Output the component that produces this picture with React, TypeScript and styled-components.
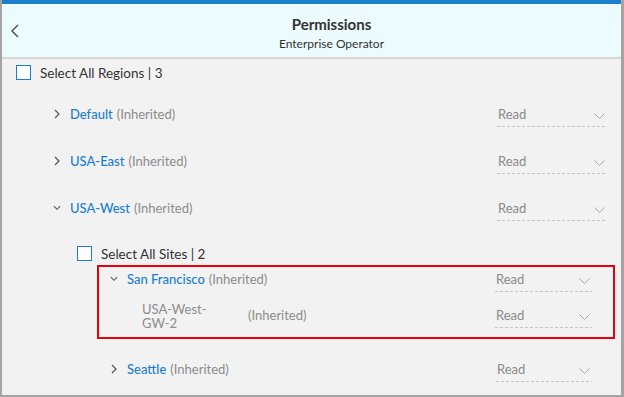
import React from "react";
import styled, { createGlobalStyle } from "styled-components";

const GlobalStyle = createGlobalStyle`
  html, body {
    margin: 0;
    padding: 0;
    background: #ffffff;
  }
  body {
    font-family: Lato, "Open Sans", "Liberation Sans", sans-serif;
  }
  * {
    box-sizing: border-box;
  }
`;

const Frame = styled.div`
  width: 624px;
  height: 397px;
  display: flex;
  flex-direction: column;
  background: #f2f2f2;
  border-left: 2px solid #a4a4a4;
  border-right: 3px solid #a4a4a4;
  border-bottom: 2px solid #a4a4a4;
  overflow: hidden;
`;

const TopBar = styled.div`
  height: 4px;
  flex-shrink: 0;
  background: #1b7fcd;
`;

const Header = styled.header`
  height: 55px;
  flex-shrink: 0;
  display: grid;
  grid-template-columns: 40px 1fr;
  background: #ebfbfe;
  border-bottom: 2px solid #d6d6d6;
`;

const BackButton = styled.button`
  border: none;
  background: none;
  padding: 20px 0 0 8px;
  display: flex;
  align-items: flex-start;
  cursor: pointer;
`;

const TitleBlock = styled.div`
  display: flex;
  flex-direction: column;
  align-items: center;
  padding-top: 11px;
`;

const Title = styled.h1`
  margin: 0;
  font-size: 15px;
  line-height: 19px;
  font-weight: 700;
  color: #333;
`;

const Subtitle = styled.div`
  margin-top: 2px;
  font-size: 12px;
  line-height: 15px;
  color: #333;
`;

const Body = styled.main`
  flex: 1;
  padding: 0 14px;
  display: flex;
  flex-direction: column;
`;

const SelectAllRow = styled.label<{ $top: number }>`
  display: flex;
  align-items: center;
  gap: 9px;
  height: 15px;
  margin-top: ${(p) => p.$top}px;
  font-size: 13.5px;
  color: #333;
`;

const CheckBox = styled.span`
  width: 15px;
  height: 15px;
  flex-shrink: 0;
  background: #fff;
  border: 1.5px solid #1a7fd0;
`;

const RegionList = styled.div`
  margin-top: 24px;
  display: flex;
  flex-direction: column;
`;

const Row = styled.div<{ $indent: number; $height?: number }>`
  display: flex;
  align-items: flex-start;
  padding-left: ${(p) => p.$indent}px;
  ${(p) => (p.$height ? `height: ${p.$height}px;` : "")}
`;

const Toggle = styled.span`
  width: 8px;
  height: 18px;
  margin-top: 1px;
  margin-right: 9px;
  display: flex;
  align-items: center;
  justify-content: center;
  flex-shrink: 0;
`;

const NameLine = styled.div`
  flex: 1;
  margin-top: 1px;
  font-size: 13px;
  line-height: 18px;
  white-space: nowrap;
`;

const Name = styled.span`
  color: #1a7fd0;
  font-weight: 500;
`;

const Inherited = styled.span`
  color: #8c8c8c;
  margin-left: 4px;
`;

const Dropdown = styled.div<{ $width: number; $offset?: number }>`
  width: ${(p) => p.$width}px;
  height: 23px;
  flex-shrink: 0;
  margin-top: ${(p) => p.$offset ?? 0}px;
  padding: 0 2px 4px 1px;
  display: flex;
  align-items: center;
  justify-content: space-between;
  font-size: 13px;
  line-height: 18px;
  color: #8a8a8a;
  background-image: linear-gradient(to right, #c4c4c4 60%, transparent 60%);
  background-size: 5px 1px;
  background-repeat: repeat-x;
  background-position: left bottom;
`;

const DropArrow = styled.svg`
  margin-top: 5px;
`;

const Sites = styled.div`
  padding-left: 61px;
  margin-top: 1px;
  display: flex;
  flex-direction: column;
`;

const Highlight = styled.div`
  margin: 4px -8px 0 20px;
  border: 2px solid #e8000b;
  padding: 2px 21px 7px 11px;
  display: flex;
  flex-direction: column;
`;

const GatewayRow = styled.div`
  display: flex;
  align-items: flex-start;
  margin-top: 10px;
  padding-left: 32px;
`;

const GatewayName = styled.div`
  width: 75px;
  margin-right: 31px;
  font-size: 13px;
  line-height: 14px;
  color: #8c8c8c;
`;

const GatewayInherited = styled.div`
  flex: 1;
  margin-top: 4px;
  font-size: 13px;
  line-height: 18px;
  color: #8c8c8c;
`;

const SeattleRow = styled(Row)`
  margin-top: 20px;
  margin-right: 15px;
`;

function ChevronRight() {
  return (
    <svg width="6" height="10" viewBox="0 0 6 10">
      <path d="M1 1l4 4-4 4" fill="none" stroke="#555" strokeWidth="1.2" />
    </svg>
  );
}

function ChevronDown() {
  return (
    <svg width="9" height="6" viewBox="0 0 9 6">
      <path d="M1 1l3.5 3.5L8 1" fill="none" stroke="#555" strokeWidth="1.2" />
    </svg>
  );
}

function Select({ width, offset }: { width: number; offset?: number }) {
  return (
    <Dropdown $width={width} $offset={offset}>
      <span>Read</span>
      <DropArrow width="11" height="6" viewBox="0 0 11 6">
        <path d="M0.5 0.5l5 5 5-5" fill="none" stroke="#a8a8a8" strokeWidth="1" />
      </DropArrow>
    </Dropdown>
  );
}

const regions = [
  { name: "Default", open: false },
  { name: "USA-East", open: false },
  { name: "USA-West", open: true },
];

export default function App() {
  return (
    <>
      <GlobalStyle />
      <Frame>
        <TopBar />
        <Header>
          <BackButton aria-label="Back">
            <svg width="9" height="14" viewBox="0 0 9 14">
              <path d="M8 1L2 7l6 6" fill="none" stroke="#555" strokeWidth="1.5" />
            </svg>
          </BackButton>
          <TitleBlock>
            <Title>Permissions</Title>
            <Subtitle>Enterprise Operator</Subtitle>
          </TitleBlock>
        </Header>

        <Body>
          <SelectAllRow $top={6}>
            <CheckBox />
            Select All Regions | 3
          </SelectAllRow>

          <RegionList>
            {regions.map((r) => (
              <Row key={r.name} $indent={37} $height={47}>
                <Toggle>{r.open ? <ChevronDown /> : <ChevronRight />}</Toggle>
                <NameLine>
                  <Name>{r.name}</Name>
                  <Inherited>(Inherited)</Inherited>
                </NameLine>
                <Select width={110} />
              </Row>
            ))}
          </RegionList>

          <Sites>
            <SelectAllRow $top={0}>
              <CheckBox />
              Select All Sites | 2
            </SelectAllRow>

            <Highlight>
              <Row $indent={0}>
                <Toggle>
                  <ChevronDown />
                </Toggle>
                <NameLine>
                  <Name>San Francisco</Name>
                  <Inherited>(Inherited)</Inherited>
                </NameLine>
                <Select width={97} />
              </Row>
              <GatewayRow>
                <GatewayName>USA-West-GW-2</GatewayName>
                <GatewayInherited>(Inherited)</GatewayInherited>
                <Select width={97} offset={3} />
              </GatewayRow>
            </Highlight>

            <SeattleRow $indent={33}>
              <Toggle>
                <ChevronRight />
              </Toggle>
              <NameLine>
                <Name>Seattle</Name>
                <Inherited>(Inherited)</Inherited>
              </NameLine>
              <Select width={96} />
            </SeattleRow>
          </Sites>
        </Body>
      </Frame>
    </>
  );
}
